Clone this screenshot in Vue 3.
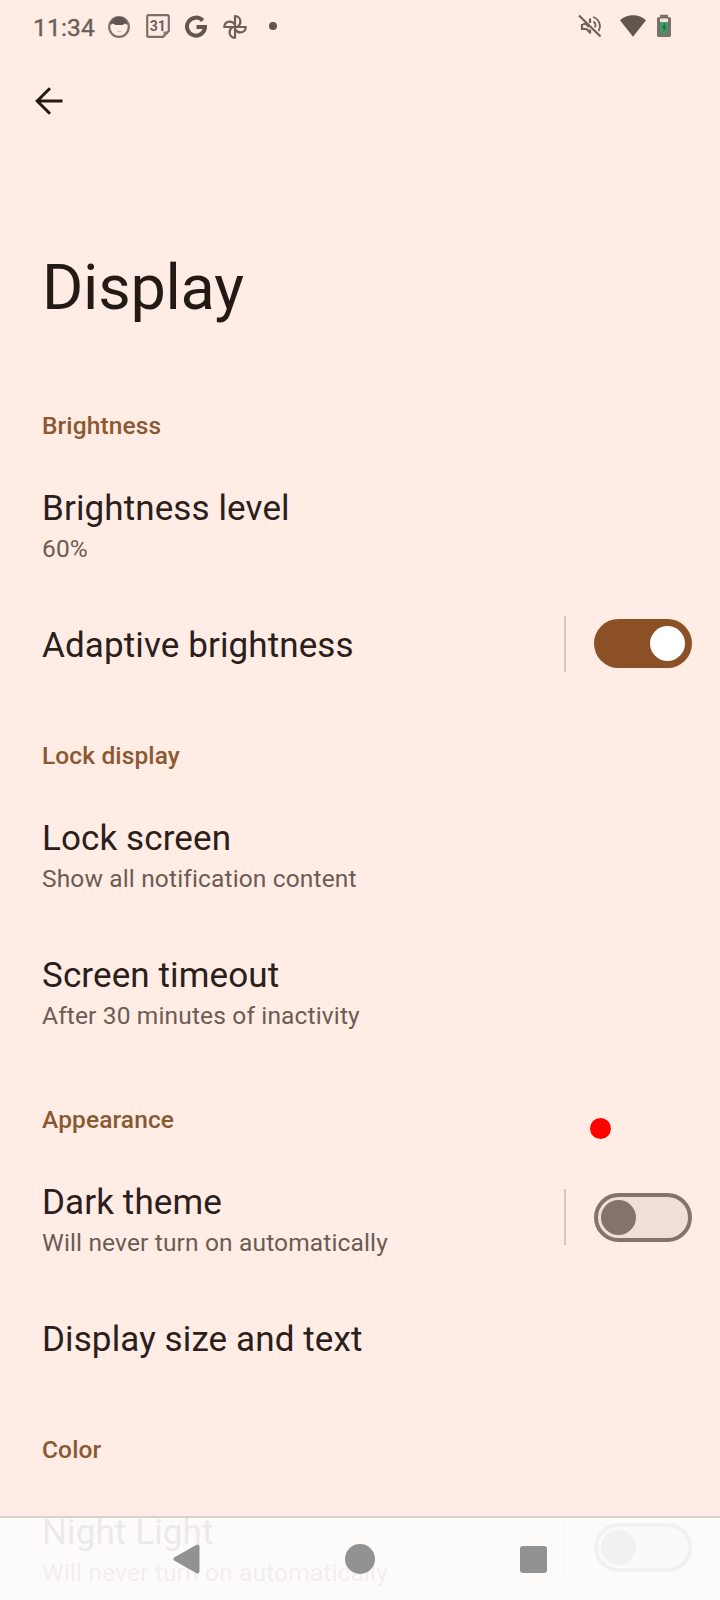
<script setup>
const sections = [
  {
    title: 'Brightness',
    rows: [
      { title: 'Brightness level', summary: '60%' },
      { title: 'Adaptive brightness', toggle: 'on' },
    ],
  },
  {
    title: 'Lock display',
    rows: [
      { title: 'Lock screen', summary: 'Show all notification content' },
      { title: 'Screen timeout', summary: 'After 30 minutes of inactivity' },
    ],
  },
  {
    title: 'Appearance',
    rows: [
      { title: 'Dark theme', summary: 'Will never turn on automatically', toggle: 'off' },
      { title: 'Display size and text' },
    ],
  },
  {
    title: 'Color',
    rows: [
      { title: 'Night Light', summary: 'Will never turn on automatically', toggle: 'off' },
    ],
  },
]
</script>

<template>
  <div class="screen">
    <header class="status">
      <span class="clock">11:34</span>
      <svg class="ic face" viewBox="0 0 24 24" width="24" height="24">
        <circle cx="12" cy="12" r="9.800" fill="none" stroke="#7b706b" stroke-width="2.200" />
        <path d="M3.500 10C4 4.500 8 2 12 2s8 2.500 8.500 8L18 8.500l-2.500 1.500h-7L6 8.500z" fill="#62574f" />
        <path d="M10 16.500h4" stroke="#d3c3bb" stroke-width="1.500" />
      </svg>
      <svg class="ic cal" viewBox="0 0 24 24" width="24" height="24">
        <path d="M2.500 1.200h19a1.300 1.300 0 0 1 1.300 1.300V17L17 22.800H2.500a1.300 1.300 0 0 1-1.300-1.300v-19a1.300 1.300 0 0 1 1.300-1.300z" fill="none" stroke="#7b706b" stroke-width="2.200" />
        <path d="M17.500 22v-4.500H22z" fill="#8b7f79" />
        <text x="11.800" y="17" text-anchor="middle" class="cal-text">31</text>
      </svg>
      <svg class="ic goog" viewBox="0 0 24 24" width="24" height="24">
        <path d="M18.700 5.600A9 9 0 1 0 21 12H12.500" fill="none" stroke="#62574f" stroke-width="4" />
      </svg>
      <svg class="ic fan" viewBox="0 0 24 24" width="24" height="24">
        <g fill="none" stroke="#6b605b" stroke-width="2.200" stroke-linejoin="round">
          <path d="M12 12V1.200c3.200 0 5.400 2.400 5.400 5.400 0 2.200-1.200 4.200-2.900 5.400z" />
          <path d="M12 12h10.800c0 3.200-2.400 5.400-5.400 5.400-2.200 0-4.200-1.200-5.400-2.900z" />
          <path d="M12 12v10.800c-3.200 0-5.400-2.400-5.400-5.400 0-2.200 1.200-4.200 2.900-5.400z" />
          <path d="M12 12H1.200c0-3.200 2.400-5.400 5.400-5.400 2.200 0 4.200 1.200 5.400 2.900z" />
        </g>
      </svg>
      <span class="dot"></span>
      <span class="grow"></span>
      <svg class="ic mute" viewBox="0 0 24 24" width="24" height="24">
        <g fill="none" stroke="#6b605b">
          <path d="M1 1.500l21.500 21" stroke-width="2.200" />
          <path d="M15.500 7.500a5 5 0 0 1 1.500 6M15 3a9.500 9.500 0 0 1 5.500 14" stroke-width="1.800" />
          <path d="M12 4.500v4.500M12 15.500v4" stroke-width="2.200" />
          <path d="M4 10v5h4.500l3.500 3.500" stroke-width="2.200" />
          <path d="M5 10h3l3 3" stroke-width="2" />
        </g>
      </svg>
      <svg class="ic wifi" viewBox="0 0 26 22" width="26" height="22">
        <path d="M0 5.200C3.500 1.900 8 .2 13 .2s9.500 1.700 13 5L13 21.800z" fill="#62574f" />
      </svg>
      <svg class="ic batt" viewBox="0 0 16 24" width="16" height="24">
        <path d="M4 .8h8V3h1.200c1 0 1.800.8 1.800 1.800v16.400c0 1-.8 1.800-1.800 1.800H2.800c-1 0-1.800-.8-1.800-1.800V4.800C1 3.800 1.800 3 2.800 3H4z" fill="#7b6f69" />
        <path d="M4 4.500h8v3.500H4z" fill="#f3e3dc" />
        <path d="M4 8h8v11.500H4z" fill="#439966" />
        <path d="M9 9l-3.500 5h2v4l3.200-5.500H9z" fill="#2f6b49" />
      </svg>
    </header>

    <div class="toolbar">
      <svg viewBox="0 0 28 28" width="28" height="28">
        <path d="M27.500 14H2.500M15 1.200L2.200 14 15 26.800" fill="none" stroke="#231a15" stroke-width="3" />
      </svg>
    </div>
    <h1>Display</h1>

    <main>
      <section v-for="s in sections" :key="s.title">
        <h2>{{ s.title }}</h2>
        <div v-for="r in s.rows" :key="r.title" class="row" :class="{ single: !r.summary }">
          <div class="texts">
            <div class="title">{{ r.title }}</div>
            <div v-if="r.summary" class="summary">{{ r.summary }}</div>
          </div>
          <div v-if="r.toggle" class="control">
            <span class="divider"></span>
            <span class="switch" :class="r.toggle"><span class="thumb"></span></span>
          </div>
        </div>
      </section>
    </main>

    <span class="touch"></span>

    <nav>
      <svg viewBox="0 0 27 30" width="27" height="30">
        <path d="M24.500 2.500v25L2.500 15z" fill="#929292" stroke="#929292" stroke-width="4" stroke-linejoin="round" />
      </svg>
      <span class="home"></span>
      <span class="recent"></span>
    </nav>
  </div>
</template>

<style>
body {
  margin: 0;
  background: #ffece4;
}
</style>

<style scoped>
.screen {
  position: relative;
  width: 720px;
  height: 1600px;
  overflow: hidden;
  background: #ffece4;
  color: #2a201b;
  font-family: Roboto, "Noto Sans", sans-serif;
}
.status {
  display: flex;
  align-items: center;
  box-sizing: border-box;
  height: 52px;
  padding: 0 48px 0 33px;
}
.clock {
  width: 74px;
  font-size: 24.5px;
  line-height: 30px;
  padding-top: 3px;
  letter-spacing: 0.2px;
  color: #6b605b;
  font-weight: 400;
  -webkit-text-stroke: 0.4px #6b605b;
}
.ic {
  flex: none;
  display: block;
}
.face { margin: 1px 15px 0 -0.5px; }
.cal { margin-right: 14.5px; }
.cal-text {
  font-family: Roboto, sans-serif;
  font-size: 14px;
  font-weight: 700;
  fill: #6b605b;
}
.goog { margin: 1px 15px 0 0; }
.fan { margin: 1px 22px 0 0; }
.dot {
  width: 8px;
  height: 8px;
  border-radius: 50%;
  background: #62574f;
}
.grow { flex: 1; }
.mute { margin-right: 18px; }
.wifi { margin-right: 10px; }
.toolbar {
  box-sizing: border-box;
  height: 98px;
  padding: 35px 0 0 35px;
}
h1 {
  box-sizing: border-box;
  height: 216px;
  margin: 0;
  padding: 101px 42px 0;
  font-size: 63px;
  line-height: 74px;
  font-weight: 400;
  letter-spacing: -0.25px;
  color: #231a15;
}
h2 {
  box-sizing: border-box;
  height: 90.2px;
  margin: 0;
  padding: 44.6px 42px 0;
  font-size: 24.5px;
  line-height: 29px;
  font-weight: 500;
  letter-spacing: 0.12px;
  color: #8b5831;
}
.row {
  display: flex;
  box-sizing: border-box;
  height: 137px;
  padding: 31.5px 28px 0 42px;
}
.row.single { height: 103px; }
.texts { flex: 1; }
.title {
  font-size: 35px;
  line-height: 41px;
  letter-spacing: 0.11px;
}
.summary {
  margin-top: 6px;
  font-size: 24.5px;
  line-height: 28px;
  letter-spacing: 0.15px;
  color: #6b5c54;
}
.control {
  display: flex;
  align-items: center;
  height: 56px;
  margin-top: 7px;
}
.single .control { margin-top: -9px; }
.divider {
  width: 2px;
  height: 56px;
  margin-right: 28px;
  background: #dac8c0;
}
.switch {
  display: flex;
  align-items: center;
  box-sizing: border-box;
  width: 98px;
  height: 49px;
  padding: 0 7px;
  border-radius: 25px;
}
.switch.on {
  justify-content: flex-end;
  background: #8b5025;
}
.switch.off {
  padding: 0 3px;
  border: 4px solid #84736a;
  background: #f0dfd7;
}
.thumb {
  width: 35px;
  height: 35px;
  border-radius: 50%;
  background: #fff;
}
.off .thumb { background: #84736a; }
.touch {
  position: absolute;
  left: 590px;
  top: 1118px;
  width: 21px;
  height: 21px;
  border-radius: 50%;
  background: #f00;
}
nav {
  position: absolute;
  left: 0;
  right: 0;
  bottom: 0;
  display: flex;
  align-items: center;
  justify-content: space-between;
  box-sizing: border-box;
  height: 84px;
  padding: 0 173px 0 173px;
  border-top: 2px solid #ddd0cb;
  background: rgba(253, 251, 252, 0.92);
  background-clip: padding-box;
}
.home {
  width: 30px;
  height: 30px;
  border-radius: 50%;
  background: #929292;
}
.recent {
  width: 27px;
  height: 27px;
  border-radius: 3px;
  background: #929292;
}
</style>
